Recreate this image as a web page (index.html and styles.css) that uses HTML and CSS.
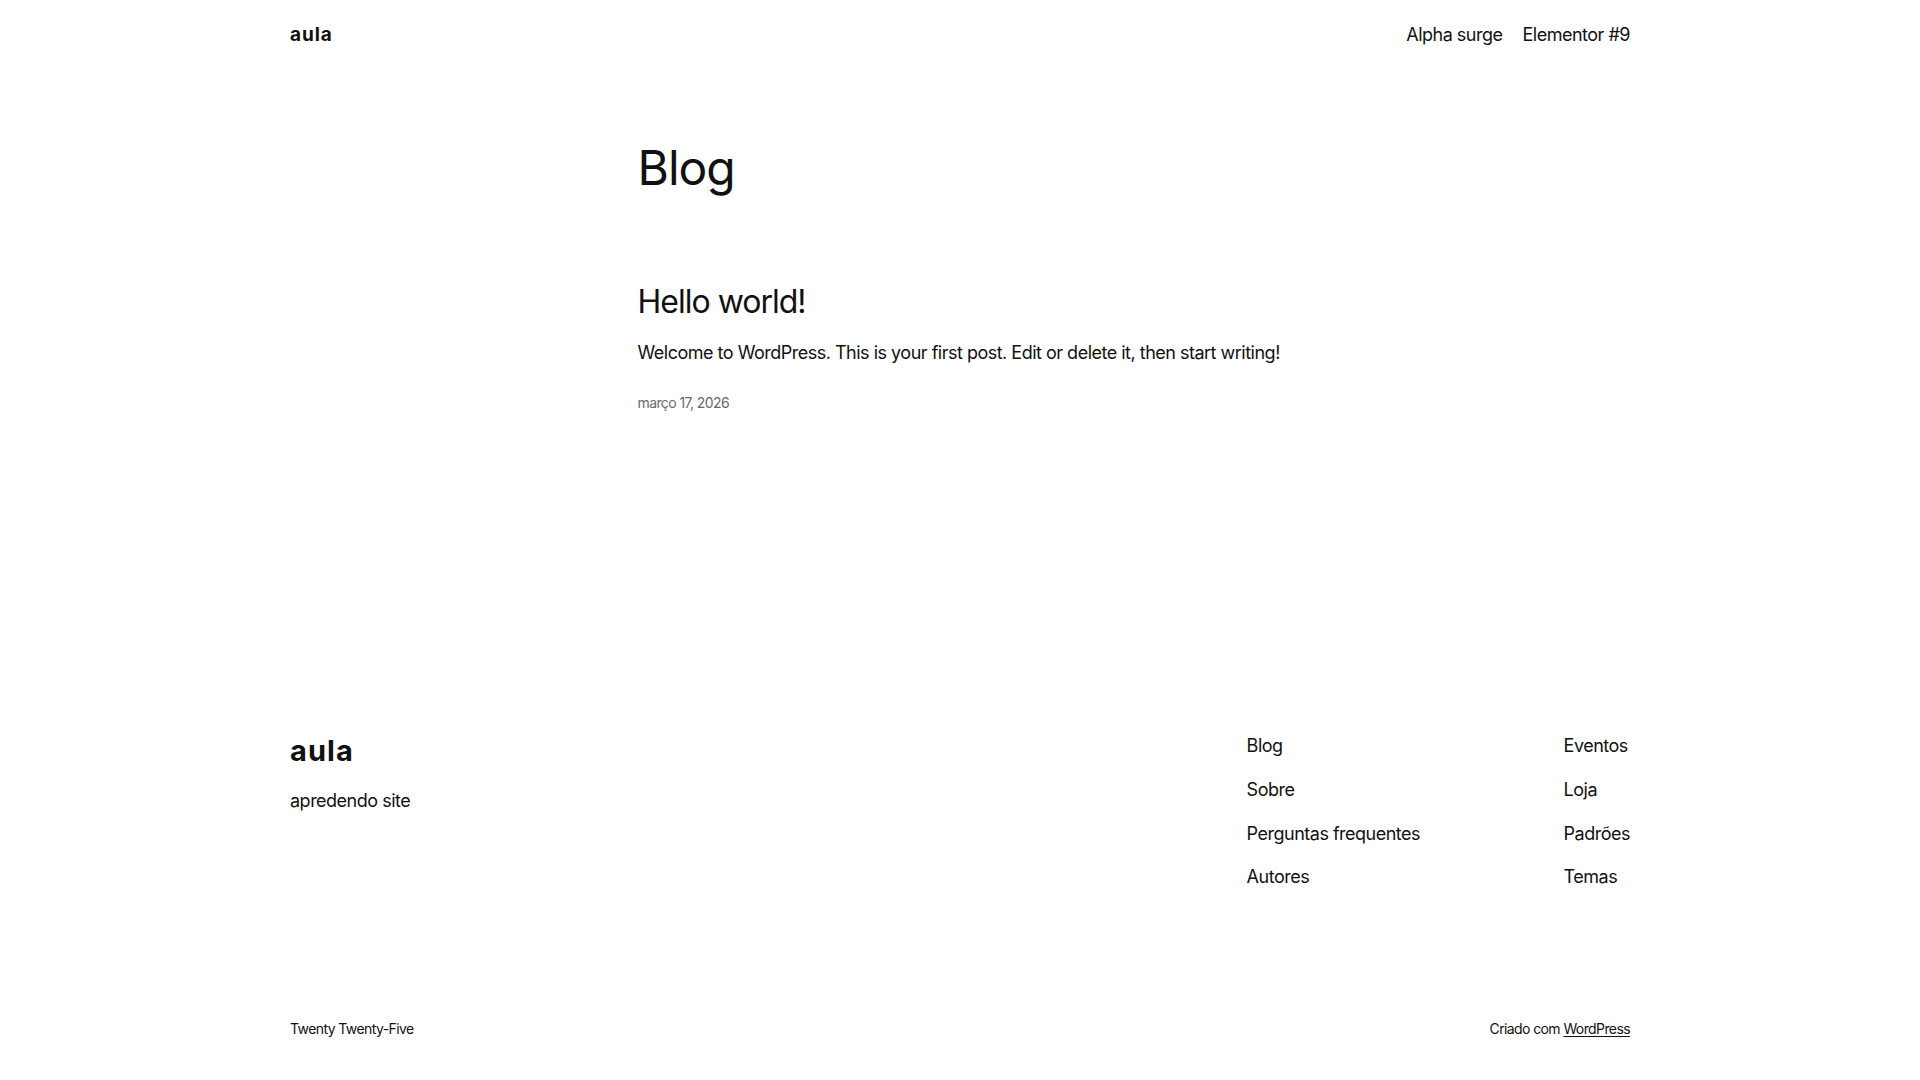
FILE: index.html
```html
<!DOCTYPE html>
<html lang="pt-BR">
<head>
<meta charset="utf-8">
<title>Blog – aula</title>
<link rel="stylesheet" href="styles.css">
</head>
<body>
<header class="site-header">
  <div class="wide header-row">
    <a class="site-title" href="#">aula</a>
    <nav class="header-nav">
      <a href="#">Alpha surge</a>
      <a href="#">Elementor #9</a>
    </nav>
  </div>
</header>
<main class="site-main">
  <div class="content">
    <h1 class="page-title">Blog</h1>
    <article class="post">
      <h2 class="post-title"><a href="#">Hello world!</a></h2>
      <p class="post-excerpt">Welcome to WordPress. This is your first post. Edit or delete it, then start writing!</p>
      <time class="post-date">março 17, 2026</time>
    </article>
  </div>
</main>
<footer class="site-footer">
  <div class="wide footer-top">
    <div class="footer-brand">
      <p class="footer-title"><a href="#">aula</a></p>
      <p class="tagline">apredendo site</p>
    </div>
    <div class="footer-navs">
      <nav class="footer-nav col-first">
        <a href="#">Blog</a>
        <a href="#">Sobre</a>
        <a href="#">Perguntas frequentes</a>
        <a href="#">Autores</a>
      </nav>
      <nav class="footer-nav">
        <a href="#">Eventos</a>
        <a href="#">Loja</a>
        <a href="#">Padrões</a>
        <a href="#">Temas</a>
      </nav>
    </div>
  </div>
  <div class="wide footer-bottom">
    <p class="credit">Twenty Twenty-Five</p>
    <p class="credit">Criado com <a class="credit-link" href="#">WordPress</a></p>
  </div>
</footer>
</body>
</html>
```

FILE: styles.css
```css
html, body {
  margin: 0;
  padding: 0;
  background: #ffffff;
}
body {
  font-family: Inter, "Noto Sans", sans-serif;
  font-size: 18px;
  line-height: 25.2px;
  color: #111111;
  letter-spacing: -0.5px;
}
a {
  color: inherit;
  text-decoration: none;
}
p {
  margin: 0;
}
.wide {
  width: 1340px;
  margin: 0 auto;
}
.content {
  width: 645px;
  margin: 0 auto;
}

/* header */
.site-header {
  padding: 22px 0 18px;
}
.header-row {
  display: flex;
  justify-content: space-between;
  align-items: center;
}
.site-title {
  font-weight: 700;
  font-size: 19px;
  letter-spacing: 0.9px;
}
.header-nav {
  display: flex;
  gap: 20px;
}

/* main */
.site-main {
  padding-top: 76px;
  padding-bottom: 250px;
}
.page-title {
  margin: 0;
  font-size: 48px;
  line-height: 54px;
  font-weight: 400;
  letter-spacing: -1px;
}
.post {
  margin-top: 89px;
}
.post-title {
  margin: 0;
  font-size: 32px;
  line-height: 36px;
  font-weight: 400;
  letter-spacing: -1px;
}
.post-excerpt {
  margin-top: 20px;
}
.post-date {
  display: block;
  margin-top: 28px;
  font-size: 14px;
  line-height: 19.6px;
  color: #686868;
  letter-spacing: -0.6px;
}

/* footer */
.site-footer {
  padding-top: 70px;
  padding-bottom: 40px;
}
.footer-top {
  display: flex;
  justify-content: space-between;
  align-items: flex-start;
}
.footer-title {
  font-size: 29px;
  line-height: 36.4px;
  font-weight: 700;
  letter-spacing: 1.1px;
}
.tagline {
  margin-top: 19px;
}
.footer-navs {
  display: flex;
}
.footer-nav {
  display: flex;
  flex-direction: column;
  gap: 18.6px;
}
.col-first {
  width: 317px;
}
.footer-bottom {
  margin-top: 129px;
  display: flex;
  justify-content: space-between;
}
.credit {
  font-size: 14px;
  line-height: 19.6px;
  letter-spacing: -0.6px;
}
.credit-link {
  text-decoration: underline;
  text-underline-offset: 2px;
}
```
